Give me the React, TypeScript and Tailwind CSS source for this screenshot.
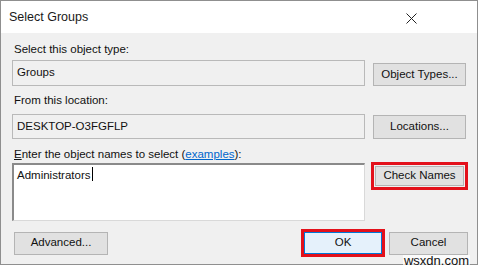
export default function App() {
  const font = { fontFamily: '"Liberation Sans", Arial, sans-serif' };
  return (
    <div className="relative w-[480px] h-[267px] bg-white" style={font}>
      <div className="w-[478px] h-[265px] border border-[#8f8f8f] bg-[#f0f0f0] flex flex-col">
        {/* title bar */}
        <div className="h-[32px] bg-white flex items-center justify-between pl-[8px] pr-[60px] shrink-0">
          <span className="text-[12.5px] text-[#1a1a1a]">Select Groups</span>
          <svg width="11" height="11" viewBox="0 0 11 11" className="mt-[2px]">
            <path d="M0.5 0.5 L10.5 10.5 M10.5 0.5 L0.5 10.5" stroke="#222" strokeWidth="1" />
          </svg>
        </div>

        <div className="pl-[11px] flex flex-col text-[11.5px] text-[#111]">
          <div className="mt-[8px] h-[16px] leading-[16px] pl-[2px]">Select this object type:</div>
          <div className="mt-[3px] flex items-end gap-[8px]">
            <div className="w-[353px] h-[26px] border border-[#b9b9b9] bg-[#f0f0f0] flex items-center pl-[4px]">Groups</div>
            <button className="w-[93px] h-[23px] border border-[#b4b4b4] bg-[#e1e1e1]">Object Types...</button>
          </div>

          <div className="mt-[6px] h-[16px] leading-[16px] pl-[2px]">From this location:</div>
          <div className="mt-[6px] flex items-end gap-[8px]">
            <div className="w-[353px] h-[25px] border border-[#b9b9b9] bg-[#f0f0f0] flex items-center pl-[4px]">DESKTOP-O3FGFLP</div>
            <button className="w-[93px] h-[24px] border border-[#b4b4b4] bg-[#e1e1e1]">Locations...</button>
          </div>

          <div className="mt-[7px] h-[16px] leading-[16px] pl-[2px]">
            <span className="underline">E</span>nter the object names to select (
            <span className="text-[#0066cc] underline">examples</span>):
          </div>
          <div className="mt-[1px] flex items-start gap-[6px]">
            <div className="w-[353px] h-[58px] bg-white border-t-2 border-l-2 border-[#8a8a8a] border-r border-b border-r-[#d9d9d9] border-b-[#d9d9d9] pl-[3px] pt-[2px] flex items-start">
              <span>Administrators</span>
              <span className="w-px h-[14px] bg-black ml-[1px]" />
            </div>
            <div className="-mt-[1px] border-[3px] border-[#e3111b] p-px">
              <button className="w-[89px] h-[20px] border border-[#b4b4b4] bg-[#e1e1e1] block">Check Names</button>
            </div>
          </div>

          <div className="mt-[8px] flex items-center">
            <button className="ml-[2px] w-[94px] h-[23px] border border-[#b4b4b4] bg-[#e1e1e1]">Advanced...</button>
            <div className="ml-[193px] border-[3px] border-[#e3111b]">
              <button className="w-[78px] h-[22px] border border-[#0078d7] bg-[#e5f1fb] block">OK</button>
            </div>
            <button className="ml-[4px] w-[79px] h-[23px] border border-[#b4b4b4] bg-[#e1e1e1]">Cancel</button>
          </div>
        </div>
      </div>
      <span
        className="absolute right-[10px] bottom-0 text-[13px] text-[#111] leading-[12px] bg-white/70 px-[1px]"
        style={font}
      >
        wsxdn.com
      </span>
    </div>
  );
}
